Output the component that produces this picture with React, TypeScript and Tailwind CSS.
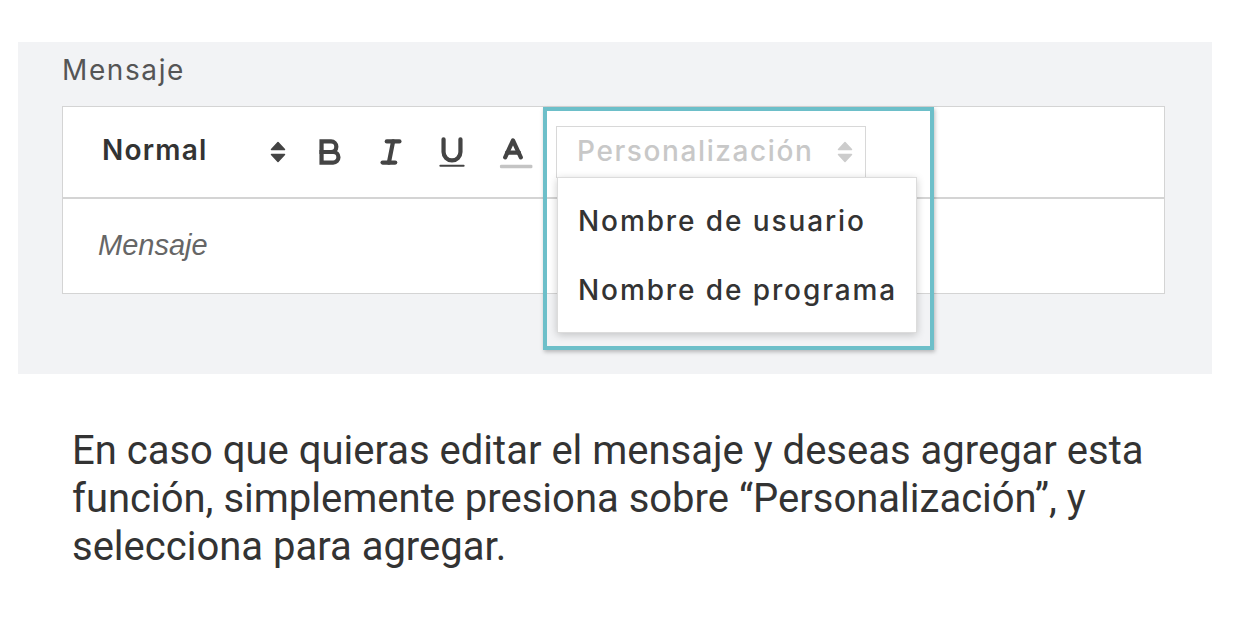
import React from "react";

const ui = { fontFamily: "Inter, 'Open Sans', sans-serif" };

function Arrows({ color }: { color: string }) {
  return (
    <svg width="16" height="22" viewBox="0 0 16 22">
      <polygon points="1.5,8.5 8,1.5 14.5,8.5" fill={color} stroke={color} strokeWidth="1.5" strokeLinejoin="round" />
      <polygon points="1.5,13.5 8,20.5 14.5,13.5" fill={color} stroke={color} strokeWidth="1.5" strokeLinejoin="round" />
    </svg>
  );
}

function IconBtn({ children }: { children: React.ReactNode }) {
  return <div className="w-[61px] flex items-center">{children}</div>;
}

const S = "#444";

export default function App() {
  return (
    <div className="w-[1236px] h-[638px] bg-white overflow-hidden">
      <div className="ml-[18px] mt-[42px] w-[1194px] h-[332px] bg-[#f2f3f5] relative pl-[44px] pt-[10px]">
        <div className="text-[28px] leading-[36px] tracking-[1.6px] text-[#555]" style={ui}>
          Mensaje
        </div>
        <div className="mt-[18px] w-[1103px] bg-white">
          <div className="h-[93px] border border-b-2 border-[#d4d4d4] flex items-center">
            <div className="w-[168px] ml-[39px] mb-[5px] text-[28px] tracking-[1.2px] font-semibold text-[#333]" style={ui}>
              Normal
            </div>
            <Arrows color="#444" />
            <div className="ml-[25px] flex items-center">
              <IconBtn>
                <svg width="38" height="38" viewBox="0 0 18 18" fill="none" stroke={S} strokeWidth="2">
                  <path d="M5,4H9.5A2.5,2.5,0,0,1,12,6.5v0A2.5,2.5,0,0,1,9.5,9H5V4Z" />
                  <path d="M5,9h5.5A2.5,2.5,0,0,1,13,11.5v0A2.5,2.5,0,0,1,10.5,14H5V9Z" />
                </svg>
              </IconBtn>
              <IconBtn>
                <svg width="38" height="38" viewBox="0 0 18 18" fill="none" stroke={S} strokeWidth="2" strokeLinecap="round">
                  <line x1="7" x2="13" y1="4" y2="4" />
                  <line x1="5" x2="11" y1="14" y2="14" />
                  <line x1="8" x2="10" y1="14" y2="4" />
                </svg>
              </IconBtn>
              <IconBtn>
                <svg width="38" height="38" viewBox="0 0 18 18" fill="none" stroke={S} strokeWidth="2" strokeLinecap="round">
                  <path d="M5,3V9a4,4,0,0,0,4,4H9a4,4,0,0,0,4-4V3" />
                  <rect x="3" y="15" width="12" height="1" rx="0.5" fill={S} stroke="none" />
                </svg>
              </IconBtn>
              <IconBtn>
                <svg width="38" height="38" viewBox="0 0 18 18" fill="none" stroke={S} strokeWidth="2" strokeLinecap="round" strokeLinejoin="round" overflow="visible">
                  <polyline points="5.3 11.5 9 3.5 12.7 11.5" />
                  <line x1="11.8" x2="6.2" y1="9.3" y2="9.3" />
                  <rect x="2.8" y="15" width="15.4" height="1.7" rx="0.6" fill="#c4c4c4" stroke="none" />
                </svg>
              </IconBtn>
            </div>
            <div className="relative ml-[1px] w-[310px] h-[52px] border border-[#d8d8d8] flex items-center justify-between pl-[20px] pr-[12px]">
              <span className="mb-[3px] text-[28px] tracking-[1.6px] font-medium text-[#c8c8c8]" style={ui}>
                Personalización
              </span>
              <Arrows color="#cccccc" />
              <div className="absolute left-0 top-[50px] w-[360px] h-[156px] bg-white border border-[#dcdcdc] shadow-[0_2px_8px_rgba(0,0,0,0.2)] pt-[9px] pl-[20px] z-10">
                <div className="h-[69px] leading-[69px] text-[28px] tracking-[1.9px] font-medium text-[#333]" style={ui}>
                  Nombre de usuario
                </div>
                <div className="h-[69px] leading-[69px] text-[28px] tracking-[1.9px] font-medium text-[#333]" style={ui}>
                  Nombre de programa
                </div>
              </div>
            </div>
          </div>
          <div className="h-[95px] border border-t-0 border-[#d4d4d4] flex items-center pl-[35px]">
            <span
              className="italic text-[29px] text-[#666]"
              style={{ fontFamily: "'Liberation Sans', Arial, sans-serif" }}
            >
              Mensaje
            </span>
          </div>
        </div>
        <div className="absolute left-[525px] top-[65px] w-[391px] h-[243px] border-4 border-[#6dbfc9] shadow-[1px_2px_4px_rgba(0,0,0,0.25)] z-20 pointer-events-none" />
      </div>
      <p
        className="mt-[53px] ml-[72px] w-[1100px] text-[40px] leading-[48px] text-[#333]"
        style={{ fontFamily: "Roboto, 'Liberation Sans', sans-serif" }}
      >
        En caso que quieras editar el mensaje y deseas agregar esta función, simplemente presiona sobre “Personalización”, y selecciona para agregar.
      </p>
    </div>
  );
}
